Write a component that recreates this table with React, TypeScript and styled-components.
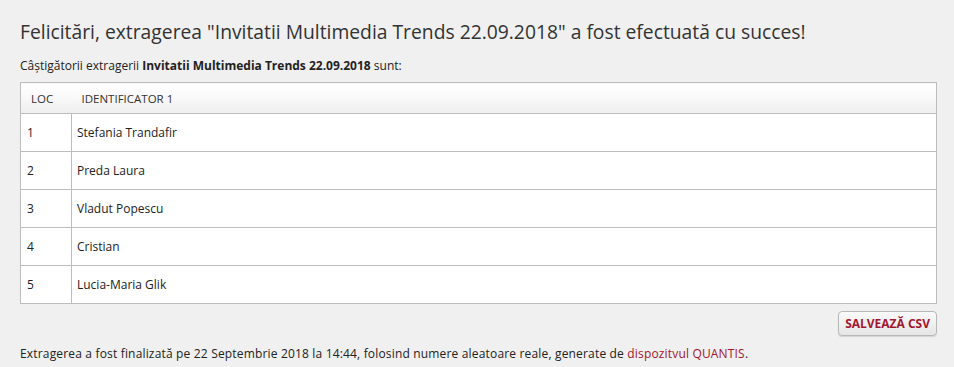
import React from 'react';
import styled, { createGlobalStyle } from 'styled-components';

const winners = [
	{ place: 1, name: 'Stefania Trandafir' },
	{ place: 2, name: 'Preda Laura' },
	{ place: 3, name: 'Vladut Popescu' },
	{ place: 4, name: 'Cristian' },
	{ place: 5, name: 'Lucia-Maria Glik' },
];

export default function App() {
	return (
		<Page>
			<GlobalStyle />
			<Title>Felicitări, extragerea "Invitatii Multimedia Trends 22.09.2018" a fost efectuată cu succes!</Title>
			<Lead>
				Câștigătorii extragerii <b>Invitatii Multimedia Trends 22.09.2018</b> sunt:
			</Lead>
			<Table>
				<thead>
					<tr>
						<HeadCell $narrow>LOC</HeadCell>
						<HeadCell>IDENTIFICATOR 1</HeadCell>
					</tr>
				</thead>
				<tbody>
					{winners.map((w) => (
						<tr key={w.place}>
							<Cell $narrow>{w.place}</Cell>
							<Cell>{w.name}</Cell>
						</tr>
					))}
				</tbody>
			</Table>
			<Actions>
				<SaveButton>SALVEAZĂ CSV</SaveButton>
			</Actions>
			<Footer>
				Extragerea a fost finalizată pe 22 Septembrie 2018 la 14:44, folosind numere aleatoare reale, generate de{' '}
				<Link href="#">dispozitvul QUANTIS</Link>.
			</Footer>
		</Page>
	);
}

const GlobalStyle = createGlobalStyle`
	body {
		margin: 0;
		background: #f0f0f0;
		font-family: "Open Sans", "Noto Sans", sans-serif;
		color: #222;
	}
`;

const Page = styled.div`
	padding: 18px 17px 0 20px;
`;

const Title = styled.h1`
	margin: 0;
	font-size: 19.3px;
	font-weight: 400;
	color: #333;
	line-height: 28px;
`;

const Lead = styled.p`
	margin: 12px 0 8px;
	font-size: 12px;
	line-height: 16px;
	color: #222;

	b {
		font-weight: 700;
	}
`;

const Table = styled.table`
	width: 100%;
	border-collapse: collapse;
	background: #fff;
	border: 1px solid #bdbdbd;
	font-size: 12px;
`;

const HeadCell = styled.th<{ $narrow?: boolean }>`
	height: 30px;
	padding: 0 0 0 10px;
	width: ${(p) => (p.$narrow ? '40px' : 'auto')};
	text-align: left;
	font-weight: 400;
	font-size: 11.5px;
	color: #333;
	background: linear-gradient(180deg, #ffffff 0%, #fafafa 40%, #eeeeee 100%);
	border-bottom: 1px solid #bdbdbd;
`;

const Cell = styled.td<{ $narrow?: boolean }>`
	height: 37px;
	padding: 0 0 0 ${(p) => (p.$narrow ? '6px' : '5px')};
	width: ${(p) => (p.$narrow ? '44px' : 'auto')};
	border: 1px solid #bdbdbd;
	color: #222;
`;

const Actions = styled.div`
	display: flex;
	justify-content: flex-end;
	padding-top: 7px;
`;

const SaveButton = styled.button`
	height: 25px;
	padding: 0 6px;
	border: 1px solid #b8b8b8;
	border-radius: 4px;
	background: linear-gradient(180deg, #fafafa 0%, #e6e6e6 100%);
	box-shadow: 0 1px 1px rgba(0, 0, 0, 0.12);
	color: #a3162f;
	font-family: "Open Sans", sans-serif;
	font-weight: 700;
	font-size: 12px;
`;

const Footer = styled.p`
	margin: 10px 0 0;
	font-size: 12px;
	letter-spacing: 0.17px;
	line-height: 16px;
	color: #222;
`;

const Link = styled.a`
	color: #a3162f;
	text-decoration: none;
`;
